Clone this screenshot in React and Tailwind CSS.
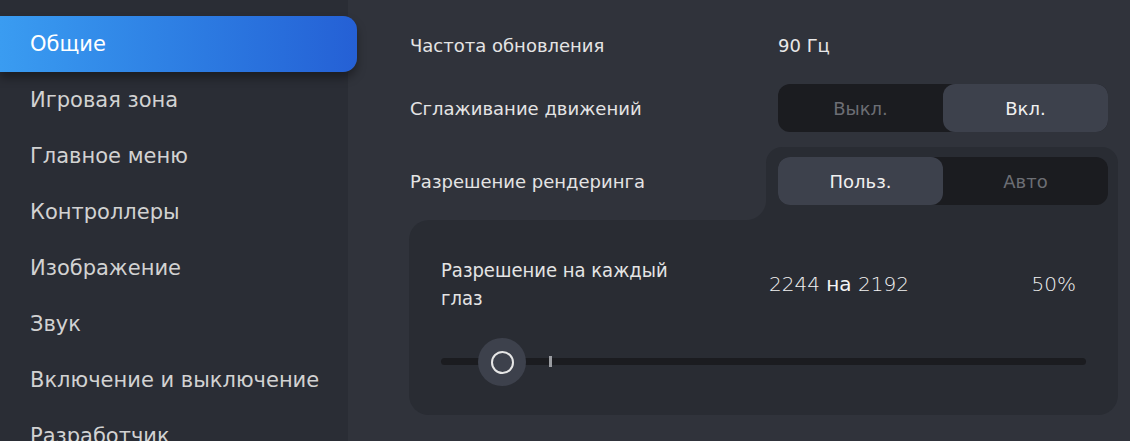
import React, { useState } from "react";

const MENU = [
  "Общие",
  "Игровая зона",
  "Главное меню",
  "Контроллеры",
  "Изображение",
  "Звук",
  "Включение и выключение",
  "Разработчик",
];

// Two-option segmented control
const Segmented = ({ options, value, onChange }) => (
  <div className="flex h-[48px] w-[330px] rounded-[12px] bg-[#1b1c20]">
    {options.map((opt) => (
      <button
        key={opt}
        onClick={() => onChange(opt)}
        className={`flex-1 rounded-[12px] text-[18px] ${
          value === opt ? "bg-[#3d414c] text-[#f0f0f0]" : "text-[#6c6e74]"
        }`}
      >
        {opt}
      </button>
    ))}
  </div>
);

const App = () => {
  const [active, setActive] = useState("Общие");
  const [smooth, setSmooth] = useState("Вкл.");
  const [render, setRender] = useState("Польз.");

  return (
    <div
      className="flex h-[441px] w-full overflow-hidden bg-[#30333b] text-[#e4e4e4]"
      style={{ fontFamily: '"DejaVu Sans", Verdana, sans-serif' }}
    >
      {/* Sidebar */}
      <aside className="relative z-10 w-[348px] shrink-0 bg-[#2a2d35] pt-4">
        {MENU.map((item) => (
          <div
            key={item}
            onClick={() => setActive(item)}
            className={`flex h-[56px] cursor-pointer items-center pl-[30px] pt-0.5 text-[21px] ${
              active === item
                ? "w-[357px] rounded-r-[14px] bg-gradient-to-r from-[#3a9cf1] to-[#2560d5] text-white shadow-[0_6px_10px_rgba(0,0,0,0.35)]"
                : "text-[#d2d2d2]"
            }`}
          >
            {item}
          </div>
        ))}
      </aside>

      {/* Settings */}
      <main className="flex flex-1 flex-col pl-[61px] pr-3 pt-[21px]">
        <div className="flex h-[48px] items-center justify-between">
          <span className="pl-px text-[18px]">Частота обновления</span>
          <div className="mr-[10px] w-[330px] text-[18px] text-[#e8e8e8]">90 Гц</div>
        </div>

        <div className="mt-[15px] flex items-center justify-between">
          <span className="pl-px text-[18px]">Сглаживание движений</span>
          <div className="mr-[10px]">
            <Segmented options={["Выкл.", "Вкл."]} value={smooth} onChange={setSmooth} />
          </div>
        </div>

        <div className="mt-[15px] flex justify-between">
          <span className="flex h-[68px] items-center pl-px text-[18px]">Разрешение рендеринга</span>
          <div className="relative w-[352px] rounded-t-[16px] bg-[#292c33] pb-[15px] pl-3 pr-[10px] pt-[10px]">
            <Segmented options={["Польз.", "Авто"]} value={render} onChange={setRender} />
            <div className="absolute bottom-0 left-[-20px] h-[20px] w-[20px] bg-[radial-gradient(circle_at_0_0,transparent_19.5px,#292c33_20.5px)]" />
          </div>
        </div>

        <div className="h-[195px] rounded-[20px] rounded-tr-none bg-[#292c33] px-8 pt-[36px]">
          <div className="flex items-center">
            <div
              className="w-[250px] text-[20px] leading-[28px]"
              style={{ fontFamily: '"DejaVu Sans Condensed", "DejaVu Sans", sans-serif' }}
            >
              Разрешение на каждый глаз
            </div>
            <div className="ml-[78px] text-[20px] font-extralight text-[#f2f2f2]">
              2244 <span className="font-normal text-[#f4f4f4]">на</span> 2192
            </div>
            <div className="ml-auto pr-[10px] text-[20px] font-extralight text-[#f2f2f2]">50%</div>
          </div>

          <div className="relative mt-[46px] h-[7px] rounded-full bg-[#1b1c20]">
            <div className="absolute left-[108px] top-[-2px] h-[11px] w-[3px] bg-[#9a9ca1]" />
            <div className="absolute left-[37px] top-[-20px] flex h-[48px] w-[48px] items-center justify-center rounded-full bg-[#3d414c]">
              <div className="h-[23px] w-[23px] rounded-full border-2 border-[#e6e6e6]" />
            </div>
          </div>
        </div>
      </main>
    </div>
  );
};

export default App;
